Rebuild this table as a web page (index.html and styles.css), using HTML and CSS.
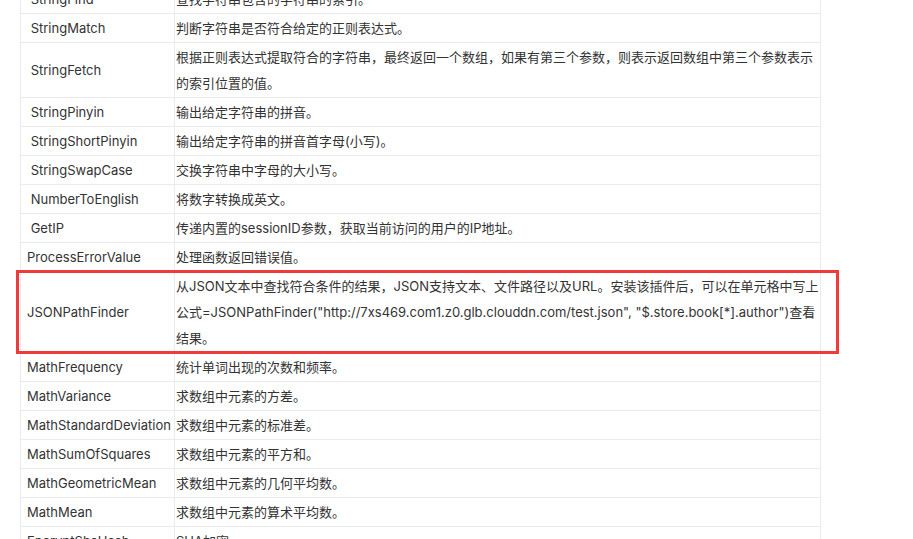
FILE: index.html
```html
<!DOCTYPE html>
<html lang="zh-CN">
<head>
    <meta charset="UTF-8">
    <meta name="viewport" content="width=device-width, initial-scale=1.0">
    <title>函数列表</title>
    <link rel="stylesheet" href="styles.css">
</head>
<body>
    <div class="page">
        <table class="func-table">
            <colgroup>
                <col class="col-name">
                <col class="col-desc">
            </colgroup>
            <tbody>
                <tr><td>&nbsp;StringFind</td><td>查找字符串包含的字符串的索引。</td></tr>
                <tr><td>&nbsp;StringMatch</td><td>判断字符串是否符合给定的正则表达式。</td></tr>
                <tr><td>&nbsp;StringFetch</td><td>根据正则表达式提取符合的字符串，最终返回一个数组，如果有第三个参数，则表示返回数组中第三个参数表示的索引位置的值。</td></tr>
                <tr><td>&nbsp;StringPinyin</td><td>输出给定字符串的拼音。</td></tr>
                <tr><td>&nbsp;StringShortPinyin</td><td>输出给定字符串的拼音首字母(小写)。</td></tr>
                <tr><td>&nbsp;StringSwapCase</td><td>交换字符串中字母的大小写。</td></tr>
                <tr><td>&nbsp;NumberToEnglish</td><td>将数字转换成英文。</td></tr>
                <tr><td>&nbsp;GetIP</td><td>传递内置的sessionID参数，获取当前访问的用户的IP地址。</td></tr>
                <tr><td>ProcessErrorValue</td><td>处理函数返回错误值。</td></tr>
                <tr class="marked">
                    <td>
                        <div class="mark-box"></div>
                        JSONPathFinder
                    </td>
                    <td>从JSON文本中查找符合条件的结果，JSON支持文本、文件路径以及URL。安装该插件后，可以在单元格中写上公式=JSONPathFinder("http://7xs469.com1.z0.glb.clouddn.com/test.json", "$.store.book[*].author")查看结果。</td>
                </tr>
                <tr><td>MathFrequency</td><td>统计单词出现的次数和频率。</td></tr>
                <tr><td>MathVariance</td><td>求数组中元素的方差。</td></tr>
                <tr><td>MathStandardDeviation</td><td>求数组中元素的标准差。</td></tr>
                <tr><td>MathSumOfSquares</td><td>求数组中元素的平方和。</td></tr>
                <tr><td>MathGeometricMean</td><td>求数组中元素的几何平均数。</td></tr>
                <tr><td>MathMean</td><td>求数组中元素的算术平均数。</td></tr>
                <tr><td>EncryptShaHash</td><td>SHA加密。</td></tr>
            </tbody>
        </table>
    </div>
</body>
</html>
```

FILE: styles.css
```css
* {
    margin: 0;
    padding: 0;
    box-sizing: border-box;
}

body {
    background-color: #fff;
    font-family: Inter, "Noto Sans CJK SC", sans-serif;
    font-size: 13px;
    color: #333;
    overflow: hidden;
}

.page {
    padding-left: 20px;
    margin-top: -16px;
}

.func-table {
    width: 800px;
    table-layout: fixed;
    border-collapse: collapse;
}

.col-name {
    width: 154px;
}

.col-desc {
    width: 646px;
}

.func-table td {
    border: 1px solid #ebebeb;
    line-height: 26px;
    padding: 1px 0 1px 1px;
    vertical-align: middle;
}

.func-table td:first-child {
    padding-left: 6px;
    white-space: nowrap;
}

.marked td:first-child {
    position: relative;
}

.mark-box {
    position: absolute;
    left: -5px;
    top: -2px;
    width: 823px;
    height: 84px;
    border: 3px solid #ef3b3b;
    pointer-events: none;
}
```
